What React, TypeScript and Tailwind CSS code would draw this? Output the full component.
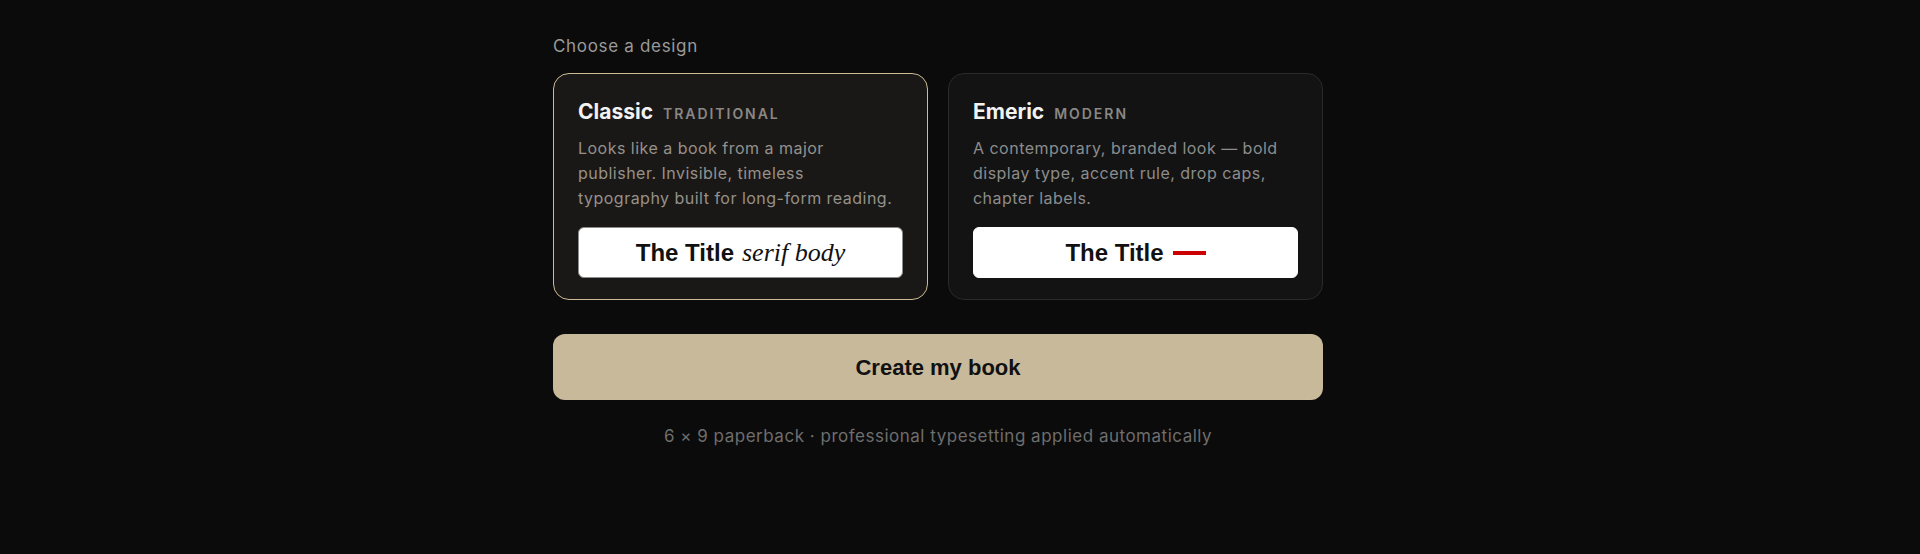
import { useState } from "react";

type Design = {
  id: string;
  name: string;
  tag: string;
  lines: string[];
};

const designs: Design[] = [
  {
    id: "classic",
    name: "Classic",
    tag: "TRADITIONAL",
    lines: [
      "Looks like a book from a major",
      "publisher. Invisible, timeless",
      "typography built for long-form reading.",
    ],
  },
  {
    id: "emeric",
    name: "Emeric",
    tag: "MODERN",
    lines: [
      "A contemporary, branded look — bold",
      "display type, accent rule, drop caps,",
      "chapter labels.",
    ],
  },
];

const Preview = ({ id, active }: { id: string; active: boolean }) => (
  <div
    className={
      "mt-4 flex h-[51px] items-center justify-center rounded-md bg-white " +
      (active ? "border border-[#8c8c8c]" : "border border-white")
    }
  >
    <span className="font-['Liberation_Sans',Arial,sans-serif] text-[24px] font-bold text-[#111]">
      The Title
    </span>
    {id === "classic" ? (
      <span className="ml-2 font-['Liberation_Serif','Times_New_Roman',serif] text-[26px] italic text-[#111]">
        serif body
      </span>
    ) : (
      <span className="ml-[9px] h-[4px] w-[33px] bg-[#cc0000]" />
    )}
  </div>
);

const App = () => {
  const [selected, setSelected] = useState("classic");

  return (
    <div className="min-h-[554px] w-full bg-[#0b0b0b] font-['Inter',sans-serif]">
      <div className="ml-[553px] w-[770px] pt-[34px]">
        <p className="mb-[15px] text-[17px] leading-6 tracking-[0.04em] text-[#9a9a9a]">
          Choose a design
        </p>

        <div className="grid grid-cols-2 gap-5">
          {designs.map((d) => {
            const active = selected === d.id;
            return (
              <button
                key={d.id}
                onClick={() => setSelected(d.id)}
                className={
                  "flex flex-col justify-start rounded-2xl border px-6 pt-6 pb-[21px] text-left " +
                  (active
                    ? "border-[#cdbb96] bg-[#1a1816]"
                    : "border-[#2a2a2a] bg-[#131313]")
                }
              >
                <div className="flex items-baseline gap-[10px]">
                  <span className="text-[21px] leading-7 font-bold text-[#f2f2f2]">
                    {d.name}
                  </span>
                  <span className="text-[14px] font-semibold tracking-[0.14em] text-[#8a8784]">
                    {d.tag}
                  </span>
                </div>
                <p
                  className={
                    "mt-[10px] text-[16px] leading-[25px] tracking-[0.03em] " +
                    (active ? "text-[#95918b]" : "text-[#8c8c8c]")
                  }
                >
                  {d.lines.map((l) => (
                    <span key={l} className="block whitespace-nowrap">
                      {l}
                    </span>
                  ))}
                </p>
                <Preview id={d.id} active={active} />
              </button>
            );
          })}
        </div>

        <button className="mt-[34px] flex h-[66px] w-full items-center justify-center rounded-xl bg-[#c8b99b] font-['Liberation_Sans',Arial,sans-serif] text-[22px] font-bold text-[#111]">
          Create my book
        </button>

        <p className="mt-6 text-center text-[17px] leading-6 tracking-[0.03em] text-[#6e6e6e]">
          6 × 9 paperback · professional typesetting applied automatically
        </p>
      </div>
    </div>
  );
};

export default App;
